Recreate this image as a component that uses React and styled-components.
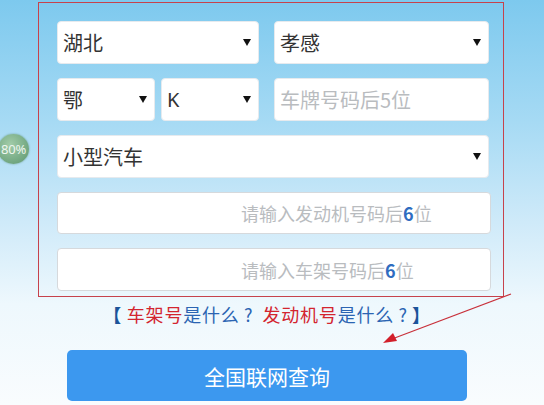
import styled, { createGlobalStyle } from 'styled-components';

const GlobalStyle = createGlobalStyle`
    html, body {
        margin: 0;
        padding: 0;
    }
    body {
        font-family: "Noto Sans", "Noto Sans CJK SC", sans-serif;
    }
`;

const Page = styled.div`
    position: relative;
    width: 544px;
    height: 405px;
    overflow: hidden;
    padding-top: 2px;
    box-sizing: border-box;
    background: linear-gradient(
        to bottom,
        #7dc9ee 0%,
        #a6daf4 30%,
        #cfeaf9 55%,
        #eef8fd 75%,
        #f9fcfe 100%
    );
`;

const Frame = styled.div`
    margin-left: 38px;
    width: 466px;
    box-sizing: border-box;
    border: 1px solid #c6424c;
    padding: 18px 12px 5px 18px;
`;

const FormGrid = styled.div`
    display: grid;
    grid-template-columns: 202px 215px;
    column-gap: 15px;
    row-gap: 14px;
`;

const Pair = styled.div`
    display: grid;
    grid-template-columns: 98px 98px;
    column-gap: 6px;
`;

const Field = styled.div`
    height: ${(props) => props.$h || 43}px;
    box-sizing: border-box;
    background: #fff;
    border: 1px solid ${(props) => (props.$outlined ? '#d6d9dc' : '#e6eaee')};
    border-radius: 4px;
    display: flex;
    align-items: center;
    font-family: "Noto Sans CJK SC", sans-serif;
    font-size: 20px;
    color: #333;
    grid-column: ${(props) => (props.$wide ? '1 / -1' : 'auto')};
    width: ${(props) => (props.$full ? '434px' : 'auto')};
`;

const SelectBox = styled(Field)`
    justify-content: space-between;
    padding: 0 7px 0 5px;
`;

const Caret = styled.span`
    width: 0;
    height: 0;
    border-left: 4px solid transparent;
    border-right: 4px solid transparent;
    border-top: 7px solid #111;
`;

const Value = styled.span`
    font-family: ${(props) => (props.$latin ? '"Noto Sans", sans-serif' : '"Noto Sans CJK SC", sans-serif')};
    font-size: 20px;
    color: #333;
`;

const Placeholder = styled.span`
    color: #b9bcbf;
    font-size: ${(props) => props.$size || 20}px;
    padding-left: ${(props) => props.$indent || 5}px;
    & > b {
        font-weight: 700;
        color: #2f6cc0;
    }
`;

const Footer = styled.div`
    margin-left: 67px;
    width: 400px;
`;

const Help = styled.div`
    margin-top: 5px;
    text-align: center;
    font-family: "Noto Sans CJK SC", sans-serif;
    font-size: 18px;
    letter-spacing: 0.8px;
    line-height: 24px;
    color: #2b64b2;
    white-space: nowrap;
    & > em {
        font-style: normal;
        color: #d3252f;
    }
    & > strong {
        color: #1b5499;
    }
`;

const Mark = styled.span`
    display: inline-block;
    width: 1em;
    text-align: center;
`;

const QueryButton = styled.button`
    display: block;
    margin-top: 24px;
    width: 400px;
    height: 51px;
    border: none;
    border-radius: 5px;
    background: #3c98ef;
    color: #fff;
    font-family: "Noto Sans CJK SC", sans-serif;
    font-size: 21px;
    cursor: pointer;
`;

const Badge = styled.div`
    position: absolute;
    left: -2px;
    top: 134px;
    width: 31px;
    height: 30px;
    border-radius: 50%;
    background: radial-gradient(circle at 40% 35%, #a2cca9 0%, #74a983 65%, #5c946c 100%);
    box-shadow: 0 0 2px rgba(60, 110, 70, 0.6);
    display: flex;
    align-items: center;
    justify-content: center;
    color: #eef6ef;
    font-family: "Noto Sans", sans-serif;
    font-size: 13px;
    letter-spacing: -0.3px;
`;

const Arrow = styled.svg`
    position: absolute;
    left: 0;
    top: 0;
    pointer-events: none;
`;

function Select({ value, latin }) {
    return (
        <SelectBox>
            <Value $latin={latin}>{value}</Value>
            <Caret />
        </SelectBox>
    );
}

export default function App() {
    return (
        <>
            <GlobalStyle />
            <Page>
                <Frame>
                    <FormGrid>
                        <Select value="湖北" />
                        <Select value="孝感" />
                        <Pair>
                            <Select value="鄂" />
                            <Select value="K" latin />
                        </Pair>
                        <Field>
                            <Placeholder>车牌号码后5位</Placeholder>
                        </Field>
                        <SelectBox $wide>
                            <Value>小型汽车</Value>
                            <Caret />
                        </SelectBox>
                        <Field $wide $full $outlined $h={42}>
                            <Placeholder $size={18} $indent={183}>
                                请输入发动机号码后<b>6</b>位
                            </Placeholder>
                        </Field>
                        <Field $wide $full $outlined>
                            <Placeholder $size={18} $indent={183}>
                                请输入车架号码后<b>6</b>位
                            </Placeholder>
                        </Field>
                    </FormGrid>
                </Frame>
                <Footer>
                    <Help>
                        <strong>【</strong> <em>车架号</em>是什么<Mark>?</Mark> <em>发动机号</em>是什么<Mark>?</Mark><strong>】</strong>
                    </Help>
                    <QueryButton>全国联网查询</QueryButton>
                </Footer>
                <Badge>80%</Badge>
                <Arrow width="544" height="405" viewBox="0 0 544 405">
                    <line x1="511" y1="294" x2="392" y2="339" stroke="#c8303a" strokeWidth="1.2" />
                    <polygon points="383,343 393,333 397,341" fill="#d21f2a" />
                </Arrow>
            </Page>
        </>
    );
}
